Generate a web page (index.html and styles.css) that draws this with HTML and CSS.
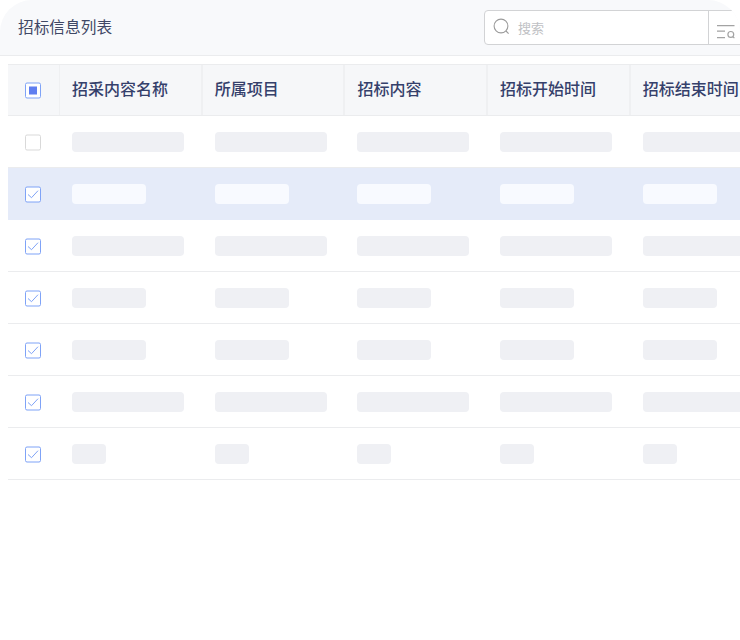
FILE: index.html
```html
<!DOCTYPE html>
<html lang="zh">
<head>
<meta charset="utf-8">
<title>招标信息列表</title>
<link rel="stylesheet" href="styles.css">
</head>
<body>
<div class="panel">
  <header class="toolbar">
    <h1 class="title">招标信息列表</h1>
    <div class="search-group">
      <label class="search">
        <svg class="search-icon" width="18" height="18" viewBox="0 0 18 18" fill="none" stroke="#9b9b9b" stroke-width="1.1"><circle cx="8" cy="8" r="6.9"/><path d="M13 13l2.6 2.6"/></svg>
        <span class="placeholder">搜索</span>
      </label>
      <button class="filter" type="button">
        <svg width="18" height="15" viewBox="0 0 18 15" fill="none" stroke="#a3a3a3" stroke-width="1.2"><path d="M0 .6h17.5M0 6.2h8M0 12.6h8"/><circle cx="13.8" cy="9.4" r="2.9"/><path d="M15.8 11.6l1.6 1.6"/></svg>
      </button>
    </div>
  </header>
  <div class="table">
    <div class="row head">
      <div class="cell check"><span class="box partial"></span></div>
      <div class="cell"><span class="label">招采内容名称</span></div>
      <div class="cell"><span class="label">所属项目</span></div>
      <div class="cell"><span class="label">招标内容</span></div>
      <div class="cell"><span class="label">招标开始时间</span></div>
      <div class="cell"><span class="label">招标结束时间</span></div>
    </div>
    <div class="row">
      <div class="cell check"><span class="box off"></span></div>
      <div class="cell"><i class="sk long"></i></div><div class="cell"><i class="sk long"></i></div><div class="cell"><i class="sk long"></i></div><div class="cell"><i class="sk long"></i></div><div class="cell"><i class="sk long"></i></div>
    </div>
    <div class="row selected">
      <div class="cell check"><span class="box"><svg class="tick" viewBox="0 0 14 14"><path d="M2 7l3.5 3.2L12 3.2"/></svg></span></div>
      <div class="cell"><i class="sk mid"></i></div><div class="cell"><i class="sk mid"></i></div><div class="cell"><i class="sk mid"></i></div><div class="cell"><i class="sk mid"></i></div><div class="cell"><i class="sk mid"></i></div>
    </div>
    <div class="row">
      <div class="cell check"><span class="box"><svg class="tick" viewBox="0 0 14 14"><path d="M2 7l3.5 3.2L12 3.2"/></svg></span></div>
      <div class="cell"><i class="sk long"></i></div><div class="cell"><i class="sk long"></i></div><div class="cell"><i class="sk long"></i></div><div class="cell"><i class="sk long"></i></div><div class="cell"><i class="sk long"></i></div>
    </div>
    <div class="row">
      <div class="cell check"><span class="box"><svg class="tick" viewBox="0 0 14 14"><path d="M2 7l3.5 3.2L12 3.2"/></svg></span></div>
      <div class="cell"><i class="sk mid"></i></div><div class="cell"><i class="sk mid"></i></div><div class="cell"><i class="sk mid"></i></div><div class="cell"><i class="sk mid"></i></div><div class="cell"><i class="sk mid"></i></div>
    </div>
    <div class="row">
      <div class="cell check"><span class="box"><svg class="tick" viewBox="0 0 14 14"><path d="M2 7l3.5 3.2L12 3.2"/></svg></span></div>
      <div class="cell"><i class="sk mid"></i></div><div class="cell"><i class="sk mid"></i></div><div class="cell"><i class="sk mid"></i></div><div class="cell"><i class="sk mid"></i></div><div class="cell"><i class="sk mid"></i></div>
    </div>
    <div class="row">
      <div class="cell check"><span class="box"><svg class="tick" viewBox="0 0 14 14"><path d="M2 7l3.5 3.2L12 3.2"/></svg></span></div>
      <div class="cell"><i class="sk long"></i></div><div class="cell"><i class="sk long"></i></div><div class="cell"><i class="sk long"></i></div><div class="cell"><i class="sk long"></i></div><div class="cell"><i class="sk long"></i></div>
    </div>
    <div class="row">
      <div class="cell check"><span class="box"><svg class="tick" viewBox="0 0 14 14"><path d="M2 7l3.5 3.2L12 3.2"/></svg></span></div>
      <div class="cell"><i class="sk tiny"></i></div><div class="cell"><i class="sk tiny"></i></div><div class="cell"><i class="sk tiny"></i></div><div class="cell"><i class="sk tiny"></i></div><div class="cell"><i class="sk tiny"></i></div>
    </div>
  </div>
</div>
</body>
</html>
```
FILE: styles.css
```css
* { box-sizing: border-box; }
html, body { margin: 0; height: 100%; background: #fff; overflow: hidden; }
body { font-family: "Noto Sans CJK SC", "Noto Sans", sans-serif; }
.panel { width: 740px; height: 640px; overflow: hidden; border-radius: 32px 32px 0 0; }
.toolbar {
  height: 56px;
  display: flex;
  align-items: flex-start;
  justify-content: space-between;
  padding: 10px 0 0 18px;
  background: #f8f9fb;
  border-bottom: 1px solid #ebecee;
}
.title { margin: 0; font-size: 15.7px; font-weight: 400; line-height: 33px; color: #3f4865; }
.search-group { display: flex; width: 262px; height: 35px; margin-right: -6px; background: #fff; border: 1px solid #d2d3d5; border-radius: 4px 0 0 4px; flex: none; }
.search { width: 223px; display: flex; align-items: center; gap: 7px; padding: 0 0 1px 8px; }
.search-icon { flex: none; }
.placeholder { font-size: 13px; color: #c0c1c4; }
.filter { flex: 1; border: 0; border-left: 1px solid #d2d3d5; background: none; padding: 10px 0 0 8px; text-align: left; }
.filter svg { display: block; }
.table { margin: 8px 0 0 8px; }
.row {
  display: grid;
  grid-template-columns: 52px repeat(5, 142.7px);
  height: 52px;
  border-bottom: 1px solid #ebecee;
}
.head {
  background: #f6f7f9;
  border-top: 1px solid #ebecee;
  font-size: 16px;
  font-weight: 500;
  color: #35406b;
}
.head .cell { border-right: 2px solid #eff0f2; }
.head .check { border-right-width: 1px; }
.label { margin-top: -4px; }
.cell { display: flex; align-items: center; padding-left: 12px; }
.check { padding-left: 17px; }
.selected { background: #e5ebf9; border-bottom-color: #e5ebf9; }
.box {
  width: 16px;
  height: 16px;
  flex: none;
  display: flex;
  align-items: center;
  justify-content: center;
  border: 1px solid #7fa3f7;
  border-radius: 2px;
  background: #fff;
  transform: translateY(.5px);
}
.box.off { border-color: #d9d9d9; }
.box.partial::after { content: ""; width: 8px; height: 8px; background: #5f7ef0; }
.tick { width: 14px; height: 14px; fill: none; stroke: #7fa3f7; stroke-width: 1; }
.sk { display: block; height: 20px; border-radius: 4px; background: #eff0f4; }
.selected .sk { background: #f8faff; }
.long { width: 112px; }
.mid { width: 74px; }
.tiny { width: 34px; }
```
